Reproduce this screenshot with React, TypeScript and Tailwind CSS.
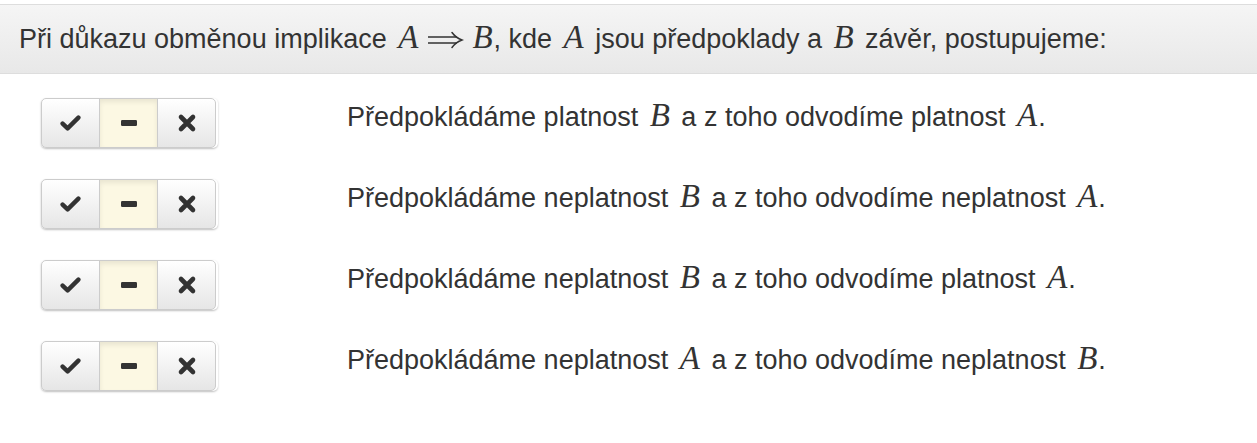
import React from "react";

const M = ({ children, tight }: { children: React.ReactNode; tight?: boolean }) => (
  <span
    className={tight ? "ml-[4px] mr-[1px] italic text-[33px] leading-none" : "mx-[4px] italic text-[33px] leading-none"}
    style={{ fontFamily: '"Liberation Serif", "DejaVu Serif", serif' }}
  >
    {children}
  </span>
);

const Implies = () => (
  <svg width="38" height="18" viewBox="0 0 38 18" className="mx-[4px] inline-block align-[-1px]" aria-label="⇒">
    <path d="M2 6 H31 M2 12 H31" stroke="#333" strokeWidth="1.5" fill="none" />
    <path d="M26 1.5 Q30 7 36 9 Q30 11 26 16.5" stroke="#333" strokeWidth="1.5" fill="none" strokeLinecap="round" />
  </svg>
);

const rows: React.ReactNode[] = [
  <>Předpokládáme platnost <M>B</M> a z toho odvodíme platnost <M tight>A</M>.</>,
  <>Předpokládáme neplatnost <M>B</M> a z toho odvodíme neplatnost <M tight>A</M>.</>,
  <>Předpokládáme neplatnost <M>B</M> a z toho odvodíme platnost <M tight>A</M>.</>,
  <>Předpokládáme neplatnost <M>A</M> a z toho odvodíme neplatnost <M tight>B</M>.</>,
];

const Check = () => (
  <svg width="21" height="16" viewBox="0 0 21 16" className="block">
    <path d="M2.6 8.6 L7.6 13.4 L18.4 2.6" fill="none" stroke="#333" strokeWidth="4.4" strokeLinecap="round" strokeLinejoin="round" />
  </svg>
);
const Minus = () => (
  <svg width="16" height="6" viewBox="0 0 16 6" className="block">
    <rect x="0" y="0" width="16" height="6" rx="1.2" fill="#333" />
  </svg>
);
const Times = () => (
  <svg width="20" height="20" viewBox="0 0 20 20" className="block">
    <path d="M4 4 L16 16 M16 4 L4 16" fill="none" stroke="#333" strokeWidth="4.6" strokeLinecap="round" />
  </svg>
);

function Toggle() {
  const base =
    "flex h-[50px] w-[59px] items-center justify-center border border-[#cccccc] text-[#333]";
  return (
    <div className="flex w-[177px] shrink-0 rounded-[5px] shadow-[0_1px_2px_rgba(0,0,0,0.25)]">
      <div className={`${base} rounded-l-[5px] bg-gradient-to-b from-white to-[#e6e6e6]`}>
        <Check />
      </div>
      <div className={`${base} -ml-px bg-[#fcf8e3] shadow-[inset_0_3px_5px_rgba(0,0,0,0.08)]`}>
        <Minus />
      </div>
      <div className={`${base} -ml-px rounded-r-[5px] bg-gradient-to-b from-white to-[#e6e6e6]`}>
        <Times />
      </div>
    </div>
  );
}

export default function App() {
  return (
    <div className="min-h-[443px] bg-white text-[#333]" style={{ fontFamily: '"Liberation Sans", Arial, sans-serif' }}>
      <div className="pt-[4px]">
        <div className="flex h-[70px] items-center border-y border-[#dddddd] bg-gradient-to-b from-[#f5f5f5] to-[#e8e8e8] px-[19px] text-[27px]">
          <span className="whitespace-nowrap">
            Při důkazu obměnou implikace <M>A</M><Implies /><M tight>B</M>, kde <M>A</M> jsou předpoklady a <M>B</M> závěr, postupujeme:
          </span>
        </div>
      </div>
      <div className="flex flex-col gap-[31px] pl-[41px] pt-[24px]">
        {rows.map((r, i) => (
          <div key={i} className="flex items-start">
            <Toggle />
            <div className="ml-[129px] whitespace-nowrap pt-[1px] text-[27px] leading-[36px]">{r}</div>
          </div>
        ))}
      </div>
    </div>
  );
}
